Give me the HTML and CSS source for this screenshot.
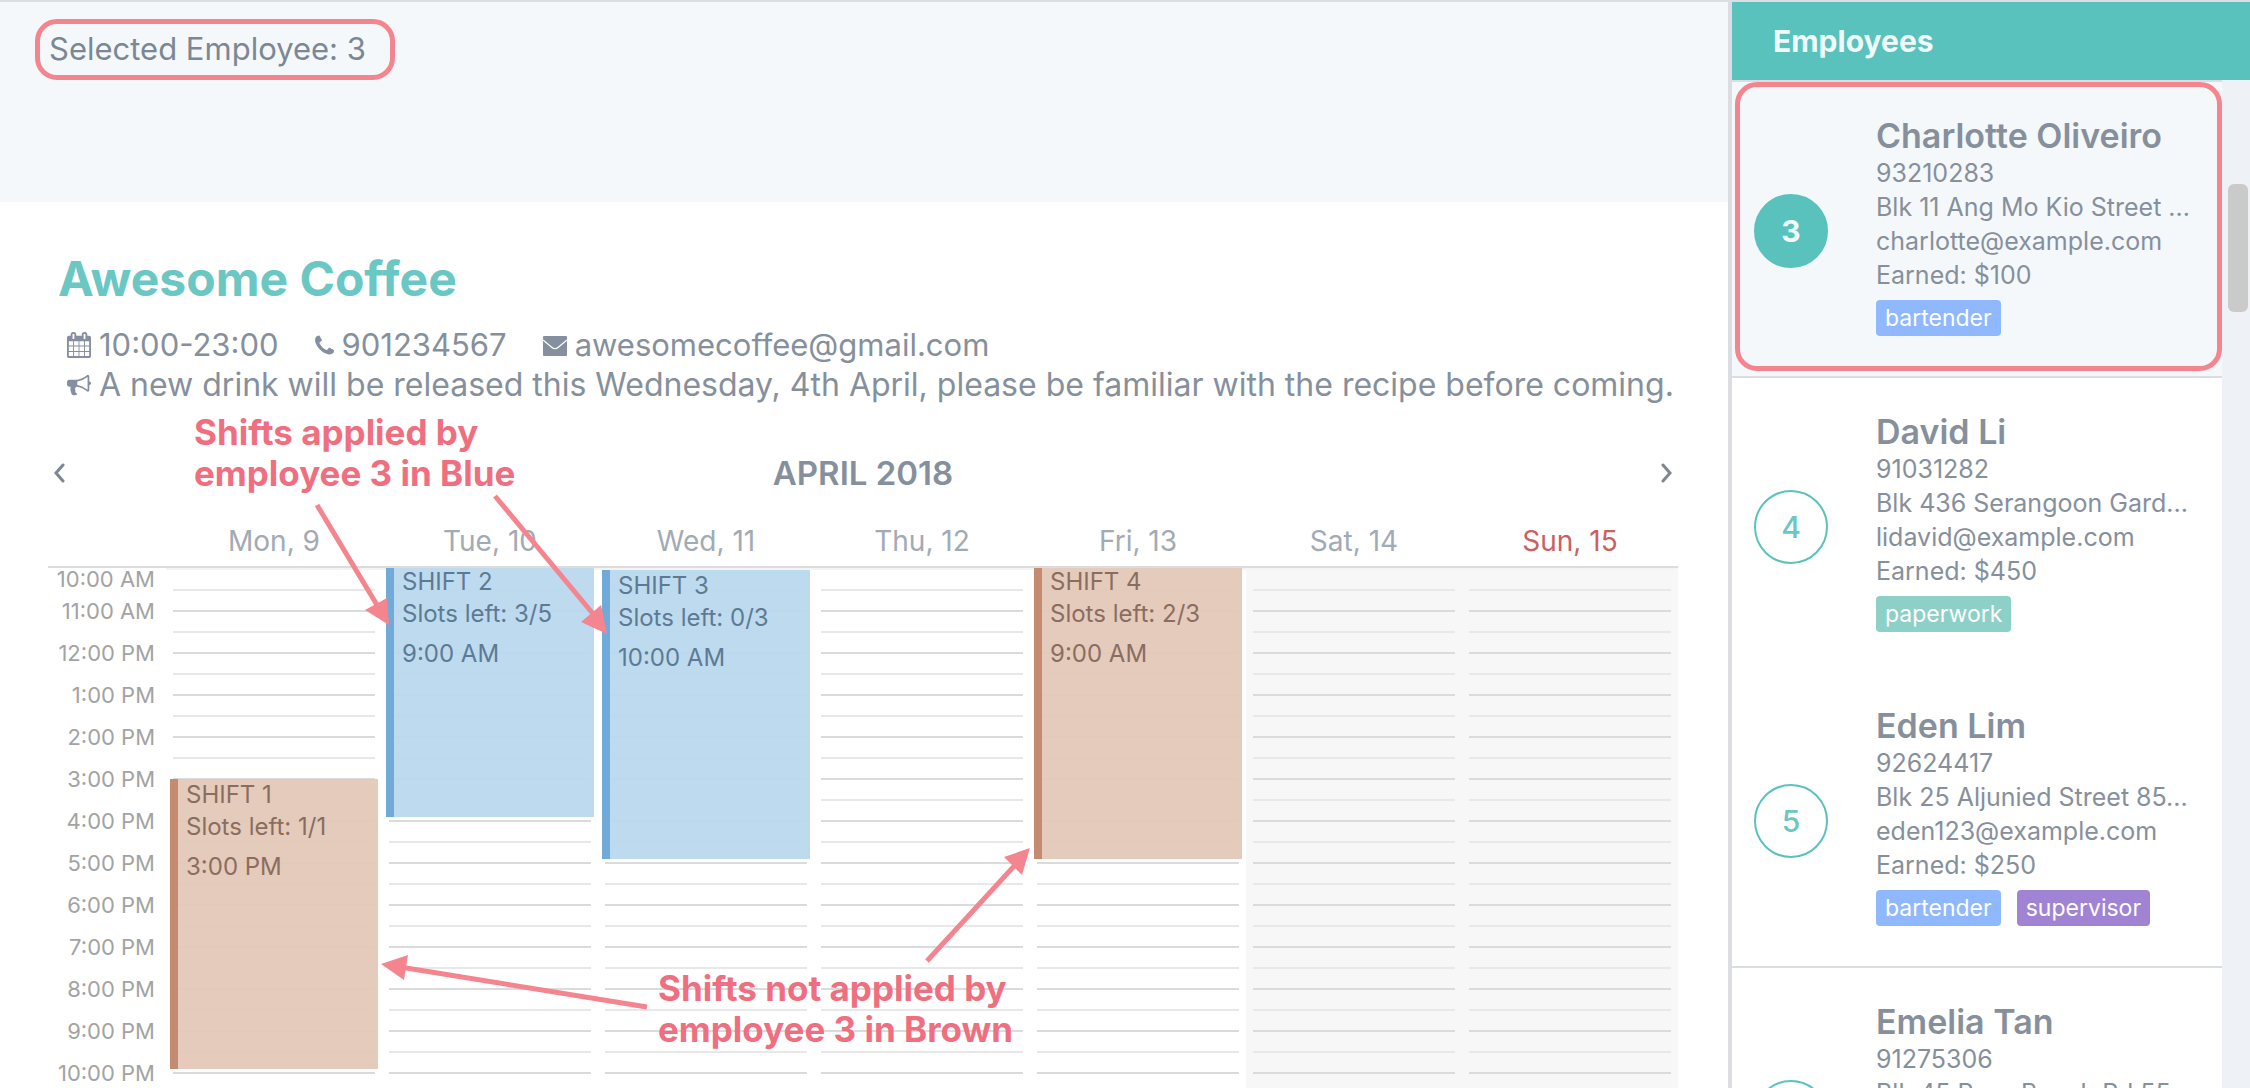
FILE: index.html
```html
<!DOCTYPE html>
<html lang="en">
<head>
<meta charset="utf-8">
<title>Awesome Coffee – Shifts</title>
<link rel="stylesheet" href="styles.css">
</head>
<body>
<main class="main">
  <section class="banner">
    <p class="banner-text callout-ring">Selected Employee: 3</p>
  </section>

  <section class="shop">
    <h1 class="shop-name">Awesome Coffee</h1>
    <div class="info">
      <span class="info-item">
        <svg class="icon" viewBox="64 0 1664 1792" aria-hidden="true"><path d="M192 1664h288v-288h-288v288zm352 0h320v-288h-320v288zm-352-352h288v-320h-288v320zm352 0h320v-320h-320v320zm-352-384h288v-288h-288v288zm736 736h320v-288h-320v288zm-384-736h320v-288h-320v288zm768 736h288v-288h-288v288zm-384-352h320v-320h-320v320zm-352-864v-288q0-13-9.5-22.5t-22.5-9.5h-64q-13 0-22.5 9.5t-9.5 22.5v288q0 13 9.5 22.5t22.5 9.5h64q13 0 22.5-9.5t9.5-22.5zm736 864h288v-320h-288v320zm-384-384h320v-288h-320v288zm384 0h288v-288h-288v288zm32-480v-288q0-13-9.5-22.5t-22.5-9.5h-64q-13 0-22.5 9.5t-9.5 22.5v288q0 13 9.5 22.5t22.5 9.5h64q13 0 22.5-9.5t9.5-22.5zm384-64v1280q0 52-38 90t-90 38h-1408q-52 0-90-38t-38-90v-1280q0-52 38-90t90-38h128v-96q0-66 47-113t113-47h64q66 0 113 47t47 113v96h384v-96q0-66 47-113t113-47h64q66 0 113 47t47 113v96h128q52 0 90 38t38 90z"/></svg>
        10:00-23:00
      </span>
      <span class="info-item">
        <svg class="icon icon-phone" viewBox="192 128 1408 1408" aria-hidden="true"><path d="M1600 1240q0 27-10 70.5t-21 68.5q-21 50-122 106-94 51-186 51-27 0-53-3.5t-57.5-12.5-47-14.5-55.5-20.5-49-18q-98-35-175-83-127-79-264-216t-216-264q-48-77-83-175-3-9-18-49t-20.5-55.5-14.5-47-12.5-57.5-3.5-53q0-92 51-186 56-101 106-122 25-11 68.5-21t70.5-10q14 0 21 3 18 6 53 76 11 19 30 54t35 63.5 31 53.5q3 4 17.5 25t21.5 35.5 7 28.5q0 20-28.5 50t-62 55-62 53-28.5 46q0 9 5 22.5t8.5 20.5 14 24 11.5 19q76 137 174 235t235 174q2 1 19 11.5t24 14 20.5 8.5 22.5 5q18 0 46-28.5t53-62 55-62 50-28.5q14 0 28.5 7t35.5 21.5 25 17.5q25 15 53.5 31t63.5 35 54 30q70 35 76 53 3 7 3 21z"/></svg>
        901234567
      </span>
      <span class="info-item">
        <svg class="icon" viewBox="0 0 24 24" aria-hidden="true"><rect x="0" y="3" width="24" height="20" rx="1"/><path d="M0 7 9 14.500Q12 17 15 14.500L24 7" fill="none" stroke="#fff" stroke-width="1.200"/></svg>
        awesomecoffee@gmail.com
      </span>
    </div>
    <div class="info">
      <span class="info-item">
        <svg class="icon" viewBox="0 0 1792 1792" aria-hidden="true"><path d="M1664 640q53 0 90.5 37.500t37.500 90.500-37.500 90.500-90.500 37.500v384q0 52-38 90t-90 38q-417-347-812-380-58 19-91 66t-31 100.500 40 92.500q-20 33-23 65.500t6 58 33.500 55 48 50 61.500 50.500q-29 58-111.500 83t-168.500 11.500-132-55.500q-7-23-29.500-87.500t-32-94.500-23-89-15-101 3.500-98.500 22-110.500h-122q-66 0-113-47t-47-113v-192q0-66 47-113t113-47h480q435 0 896-384 52 0 90 38t38 90v384zm-128 604v-954q-394 302-768 343v270q377 42 768 341z"/></svg>
        A new drink will be released this Wednesday, 4th April, please be familiar with the recipe before coming.
      </span>
    </div>
  </section>

  <section class="calendar">
    <div class="toolbar">
      <button class="nav" type="button" aria-label="Previous week"><svg width="12" height="20" viewBox="0 0 12 20"><path d="M10 2 3 10l7 8"/></svg></button>
      <h2 class="month">APRIL 2018</h2>
      <button class="nav" type="button" aria-label="Next week"><svg width="12" height="20" viewBox="0 0 12 20"><path d="m2 2 7 8-7 8"/></svg></button>
    </div>
    <div class="days">
      <span></span>
      <span>Mon, 9</span><span>Tue, 10</span><span>Wed, 11</span><span>Thu, 12</span><span>Fri, 13</span><span>Sat, 14</span><span class="holiday">Sun, 15</span>
    </div>
    <div class="grid">
      <div class="times">
        <span>10:00 AM</span><span>11:00 AM</span><span>12:00 PM</span><span>1:00 PM</span><span>2:00 PM</span><span>3:00 PM</span><span>4:00 PM</span><span>5:00 PM</span><span>6:00 PM</span><span>7:00 PM</span><span>8:00 PM</span><span>9:00 PM</span><span>10:00 PM</span>
      </div>
      <div class="day">
        <article class="shift brown from-3pm"><p>SHIFT 1</p><p>Slots left: 1/1</p><p class="start">3:00 PM</p></article>
      </div>
      <div class="day">
        <article class="shift blue earlier to-4pm"><p>SHIFT 2</p><p>Slots left: 3/5</p><p class="start">9:00 AM</p></article>
      </div>
      <div class="day">
        <article class="shift blue to-5pm"><p>SHIFT 3</p><p>Slots left: 0/3</p><p class="start">10:00 AM</p></article>
      </div>
      <div class="day"></div>
      <div class="day">
        <article class="shift brown earlier to-5pm"><p>SHIFT 4</p><p>Slots left: 2/3</p><p class="start">9:00 AM</p></article>
      </div>
      <div class="day weekend"></div>
      <div class="day weekend"></div>
    </div>

    <p class="note note-applied">Shifts applied by<br>employee 3 in Blue</p>
    <p class="note note-open">Shifts not applied by<br>employee 3 in Brown</p>
    <svg class="arrows" width="1100" height="620" viewBox="0 455 1100 620" aria-hidden="true">
      <g stroke="#f4858f" stroke-width="5">
        <path d="M317 507 377 607"/><path d="M495 498 594 617"/><path d="M647 1009 400 969"/><path d="M927 963 1017 865"/>
      </g>
      <g fill="#f4858f">
        <path d="m389 627-24-15 22-12z"/><path d="m607 636-26-12 20-17z"/><path d="m381 966 27-9-4 25z"/><path d="m1030 850-26 9 18 18z"/>
      </g>
    </svg>
  </section>
</main>

<aside class="sidebar">
  <h2 class="side-title">Employees</h2>
  <div class="side-body">
    <ul class="list">
      <li class="employee selected">
        <span class="badge">3</span>
        <div class="details">
          <h3>Charlotte Oliveiro</h3>
          <p>93210283</p><p>Blk 11 Ang Mo Kio Street ...</p><p>charlotte@example.com</p><p>Earned: $100</p>
          <div class="tags"><span class="tag bartender">bartender</span></div>
        </div>
      </li>
      <li class="employee">
        <span class="badge">4</span>
        <div class="details">
          <h3>David Li</h3>
          <p>91031282</p><p>Blk 436 Serangoon Gard...</p><p>lidavid@example.com</p><p>Earned: $450</p>
          <div class="tags"><span class="tag paperwork">paperwork</span></div>
        </div>
      </li>
      <li class="employee ruled">
        <span class="badge">5</span>
        <div class="details">
          <h3>Eden Lim</h3>
          <p>92624417</p><p>Blk 25 Aljunied Street 85...</p><p>eden123@example.com</p><p>Earned: $250</p>
          <div class="tags"><span class="tag bartender">bartender</span><span class="tag supervisor">supervisor</span></div>
        </div>
      </li>
      <li class="employee">
        <span class="badge">6</span>
        <div class="details">
          <h3>Emelia Tan</h3>
          <p>91275306</p><p>Blk 45 Pass Beach Rd 55...</p>
        </div>
      </li>
    </ul>
    <div class="scrollbar"><div class="thumb"></div></div>
  </div>
</aside>
</body>
</html>
```
FILE: styles.css
```css
* { box-sizing: border-box; }
h1, h2, h3, p, ul { margin: 0; padding: 0; }

body {
  margin: 0;
  display: flex;
  height: 100vh;
  overflow: hidden;
  border-top: 2px solid #dcdee2;
  font-family: Inter, "Liberation Sans", sans-serif;
  color: #868f9c;
  background: #fff;
}

/* Main column */
.main { flex: 1; min-width: 0; }

.banner {
  height: 200px;
  padding: 17px 35px;
  background: #f4f8fb;
}
.callout-ring {
  width: fit-content;
  border: 5px solid #f4858f;
  border-radius: 22px;
}
.banner-text {
  padding: 5px 24px 7px 9px;
  font-size: 31px;
  line-height: 39px;
  color: #7c8794;
}

.shop { padding: 50px 50px 0 58px; }
.shop-name {
  margin-bottom: 19px;
  font-size: 48px;
  line-height: 54px;
  color: #6ac7c3;
}
.info {
  display: flex;
  gap: 36px;
  padding-left: 9px;
  font-size: 31px;
  line-height: 40px;
  white-space: nowrap;
}
.info + .info { font-size: 32px; }
.info-item { display: flex; align-items: center; gap: 8px; }
.icon { width: 24px; height: 26px; fill: #868f9f; }
.icon-phone { width: 19px; height: 20px; }

/* Calendar */
.calendar {
  position: relative;
  margin: 48px 50px 0 48px;
}
.toolbar {
  display: flex;
  align-items: center;
  justify-content: space-between;
  height: 40px;
  margin-bottom: 28px;
}
.month { font-size: 33px; line-height: 40px; font-weight: 600; }
.nav {
  display: flex;
  padding: 0 5px;
  border: 0;
  background: none;
}
.nav path { fill: none; stroke: #7c8794; stroke-width: 3; stroke-linecap: round; }

.days, .grid {
  display: grid;
  grid-template-columns: 118px repeat(7, 1fr);
}
.days {
  padding-bottom: 5px;
  border-bottom: 2px solid #dcdcdc;
  font-size: 28px;
  line-height: 40px;
  text-align: center;
  color: #a2aab4;
}
.days .holiday { color: #c96163; }

.times {
  display: flex;
  flex-direction: column;
  padding-right: 11px;
  font-size: 22px;
  line-height: 42px;
  text-align: right;
  color: #a3a3a3;
}
.times span:first-child { line-height: 22px; }

/* Half-hour rows: light rule on the half hour, darker rule on the hour */
.day {
  display: grid;
  grid-template-rows: repeat(26, 21px);
  padding: 0 7px;
  border-top: 2px solid #f4f4f4;
  background: repeating-linear-gradient(transparent 0 19px, #e8e8e8 19px 21px, transparent 21px 40px, #dbdbdb 40px 42px) content-box;
}
.weekend {
  background:
    repeating-linear-gradient(transparent 0 19px, #e8e8e8 19px 21px, transparent 21px 40px, #dbdbdb 40px 42px) content-box,
    linear-gradient(#f7f7f7, #f7f7f7) border-box;
}

.shift {
  margin: 0 -3px 5px;
  padding: 2px 8px;
  border-left: 8px solid;
  font-size: 24px;
  line-height: 28px;
}
.shift p + p { margin-top: 4px; }
.shift p.start { margin-top: 12px; }
.earlier { margin-top: -2px; padding-top: 0; }
.to-4pm { grid-row: 1 / 13; }
.to-5pm { grid-row: 1 / 15; }
.from-3pm { grid-row: 11 / 25; margin-top: -1px; }
.blue { border-color: #6faad9; background: rgba(186, 216, 237, 0.95); color: #5d7a95; }
.brown { border-color: #c48b70; background: rgba(228, 200, 184, 0.95); color: #8b6d5f; }

/* Annotations over the calendar */
.note {
  position: absolute;
  font-size: 35px;
  line-height: 41px;
  font-weight: 700;
  color: #ef6f80;
  white-space: nowrap;
}
.note-applied { left: 146px; top: -41px; }
.note-open { left: 610px; top: 515px; }
.arrows { position: absolute; left: -48px; top: 0; }

/* Sidebar */
.sidebar {
  display: flex;
  flex-direction: column;
  width: 522px;
  border-left: 4px solid #dcdde3;
}
.side-title {
  padding: 0 41px;
  font-size: 30px;
  line-height: 78px;
  color: #f0faf9;
  background: #5ac2bd;
}
.side-body { display: flex; flex: 1; min-height: 0; }
.list {
  flex: 1;
  min-width: 0;
  list-style: none;
  overflow: hidden;
  border-top: 2px solid #dcdde3;
}
.employee {
  display: flex;
  gap: 48px;
  height: 294px;
  padding: 34px 22px 0;
}
.selected, .ruled {
  height: 296px;
  border-bottom: 2px solid #dcdde3;
}
.selected { position: relative; background: #f4f8fb; }
.selected::after {
  content: "";
  position: absolute;
  inset: 0 0 5px 3px;
  border: 5px solid #f4858f;
  border-radius: 22px;
}
.badge {
  flex: none;
  width: 74px;
  height: 74px;
  margin-top: 78px;
  border: 2px solid #5ac2bd;
  border-radius: 50%;
  font-size: 30px;
  line-height: 70px;
  font-weight: 500;
  text-align: center;
  color: #6ac7c3;
}
.selected .badge { background: #5ac2bd; color: #f0faf9; font-weight: 700; }
.details { font-size: 25px; line-height: 34px; white-space: nowrap; }
.details h3 { font-size: 34px; line-height: 40px; font-weight: 600; }
.tags { display: flex; gap: 16px; margin-top: 8px; }
.tag {
  padding: 0 9px;
  border-radius: 4px;
  font-size: 23px;
  line-height: 36px;
  color: #fff;
}
.bartender { background: #8fb8ff; }
.paperwork { background: #8dd0c8; }
.supervisor { background: #a084d3; }

.scrollbar { width: 28px; padding: 104px 2px 0 6px; background: #eef2f6; }
.thumb { height: 128px; border-radius: 6px; background: #cacaca; }
```
